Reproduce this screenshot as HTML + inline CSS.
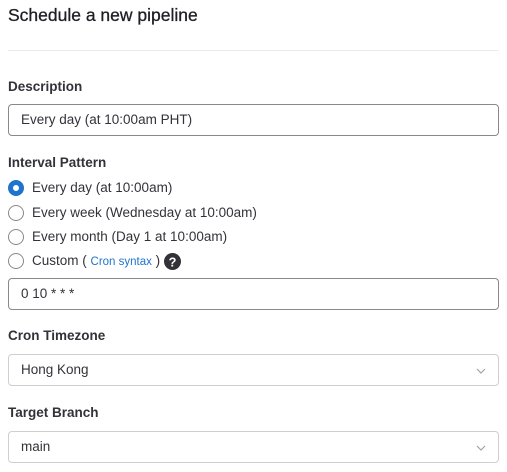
<!DOCTYPE html>
<html><head><style>
*{box-sizing:border-box;margin:0;padding:0}
body{width:507px;height:472px;background:#fff;font-family:"Liberation Sans",sans-serif;color:#333238;position:relative;overflow:hidden}
.a{position:absolute;white-space:nowrap}
.t{left:8px;top:5px;font-size:17.5px;color:#1f1e24;-webkit-text-stroke:0.3px #1f1e24}
.hr{left:8px;top:50px;width:491px;height:1px;background:#ececef}
.l{left:8px;font-size:13.5px;font-weight:bold}
.in{left:8px;width:491px;height:32px;border:1px solid #89888d;border-radius:4px;font-size:13.5px;padding:0 0 0 12px;line-height:30px}
.sel{border-color:#cfcfd3}
.r{left:8px;font-size:13.5px;line-height:16px}
.r i{position:absolute;left:0;top:0;width:16px;height:16px;border:1px solid #89888d;border-radius:50%}
.r i.on{background:#1f75cb;border-color:#1f75cb}
.r i.on:after{content:"";position:absolute;left:4px;top:4px;width:6px;height:6px;border-radius:50%;background:#fff}
.r span{margin-left:24px}
.chev{position:absolute;right:12px;top:12px}
</style></head><body>
<div class="a t">Schedule a new pipeline</div>
<div class="a hr"></div>
<div class="a l" style="top:79px">Description</div>
<div class="a in" style="top:104px">Every day (at 10:00am PHT)</div>
<div class="a l" style="top:155px">Interval Pattern</div>
<div class="a r" style="top:180px"><i class="on"></i><span>Every day (at 10:00am)</span></div>
<div class="a r" style="top:205px"><i></i><span>Every week (Wednesday at 10:00am)</span></div>
<div class="a r" style="top:229px"><i></i><span>Every month (Day 1 at 10:00am)</span></div>
<div class="a r" style="top:253px"><i></i><span>Custom ( <span style="margin:0;color:#1f75cb;font-size:11.5px">Cron syntax</span> )</span>
<svg style="position:absolute;left:156px;top:0" width="17" height="17" viewBox="0 0 16 16"><circle cx="8" cy="8" r="8" fill="#333238"/><text x="8" y="12.5" text-anchor="middle" font-family="Liberation Sans" font-weight="bold" font-size="12" fill="#fff">?</text></svg></div>
<div class="a in" style="top:278px">0 10 * * *</div>
<div class="a l" style="top:328px">Cron Timezone</div>
<div class="a in sel" style="top:354px">Hong Kong<svg class="chev" width="10" height="8" viewBox="0 0 10 8"><path d="M1 2l4 4 4-4" fill="none" stroke="#a4a3a8" stroke-width="1.2"/></svg></div>
<div class="a l" style="top:405px">Target Branch</div>
<div class="a in sel" style="top:431px">main<svg class="chev" width="10" height="8" viewBox="0 0 10 8"><path d="M1 2l4 4 4-4" fill="none" stroke="#a4a3a8" stroke-width="1.2"/></svg></div>
</body></html>
